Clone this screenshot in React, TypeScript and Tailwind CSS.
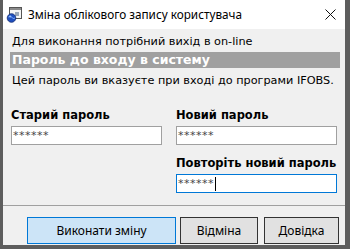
import React from 'react';

const body = { fontFamily: '"DejaVu Sans", Tahoma, sans-serif' };
const ui = { fontFamily: '"Noto Sans", "Open Sans", sans-serif' };

function AppIcon() {
  return (
    <svg width="17" height="17" viewBox="0 0 17 17">
      <rect x="3.5" y="1.5" width="12" height="11" fill="#f4f4f4" stroke="#555" />
      <rect x="4" y="2" width="11" height="2" fill="#8a8a8a" />
      <rect x="9" y="6" width="4" height="4" fill="#9aa7b8" />
      <circle cx="5.5" cy="12" r="4.3" fill="#1f4fbf" stroke="#102a70" strokeWidth="0.8" />
      <path d="M2.5 11c1.5-1 3-0.5 3.5 0.5s1.8 1.2 3 0.5" stroke="#7fb2ff" strokeWidth="1" fill="none" />
      <circle cx="4.2" cy="10.5" r="1.1" fill="#9cc4ff" />
    </svg>
  );
}

function Field({ label, focused }: { label: string; focused?: boolean }) {
  return (
    <div className="flex flex-col">
      <div className="text-[11.5px] font-bold leading-[15px] text-black whitespace-nowrap" style={body}>
        {label}
      </div>
      <div
        className={
          focused
            ? 'mt-[3px] h-[19px] bg-white border border-[#0078d7] flex items-center pl-[1px]'
            : 'mt-[3px] h-[19px] bg-white border border-[#a0a0a0] flex items-center pl-[1px]'
        }
      >
        <span className="text-[11px] leading-none text-[#444] tracking-[0.5px]" style={body}>
          ******
        </span>
        {focused && <span className="w-px h-[14px] bg-black ml-[1px]" />}
      </div>
    </div>
  );
}

export default function App() {
  return (
    <div className="w-[350px] h-[249px] bg-[#5d5d5d] pl-[3px] pr-[5px] pb-[4px] flex flex-col">
      <div className="flex-1 flex flex-col bg-[#f0f0f0]">
        <div className="h-[29px] bg-white flex items-center pl-[3px] pr-[9px]">
          <AppIcon />
          <span className="ml-[5px] text-[11.75px] text-black" style={ui}>
            Зміна облікового запису користувача
          </span>
          <svg className="ml-auto" width="11" height="11" viewBox="0 0 11 11">
            <path d="M0.5 0.5L10.5 10.5M10.5 0.5L0.5 10.5" stroke="#111" strokeWidth="1" />
          </svg>
        </div>

        <div className="flex flex-col pl-[7px] pr-[5px] text-[11.25px] text-black" style={body}>
          <div className="pl-[2px] mt-[6px] leading-[14px]">Для виконання потрібний вихід в on-line</div>
          <div className="mt-[3px] h-[16px] bg-[#a0a0a0] text-white text-[12.5px] font-bold pl-[2px] leading-[16px]">
            Пароль до входу в систему
          </div>
          <div className="pl-[2px] mt-[6px] leading-[14px]">
            Цей пароль ви вказуєте при вході до програми IFOBS.
          </div>

          <div className="mt-[20px] grid grid-cols-[151px_161px] gap-x-[14px] pl-[1px]">
            <Field label="Старий пароль" />
            <Field label="Новий пароль" />
            <div />
            <div className="mt-[11px]">
              <Field label="Повторіть новий пароль" focused />
            </div>
          </div>
        </div>

        <div className="mt-[12px] border-t border-[#a0a0a0]" />

        <div className="flex mt-[11px] pl-[24px] text-[12px] text-black" style={ui}>
          <button className="w-[149px] h-[27px] bg-[#cce4f7] border border-[#0078d7]">Виконати зміну</button>
          <button className="ml-[4px] w-[78px] h-[27px] bg-[#e1e1e1] border border-[#333]">Відміна</button>
          <button className="ml-[6px] w-[75px] h-[27px] bg-[#e1e1e1] border border-[#333]">Довідка</button>
        </div>
      </div>
    </div>
  );
}
